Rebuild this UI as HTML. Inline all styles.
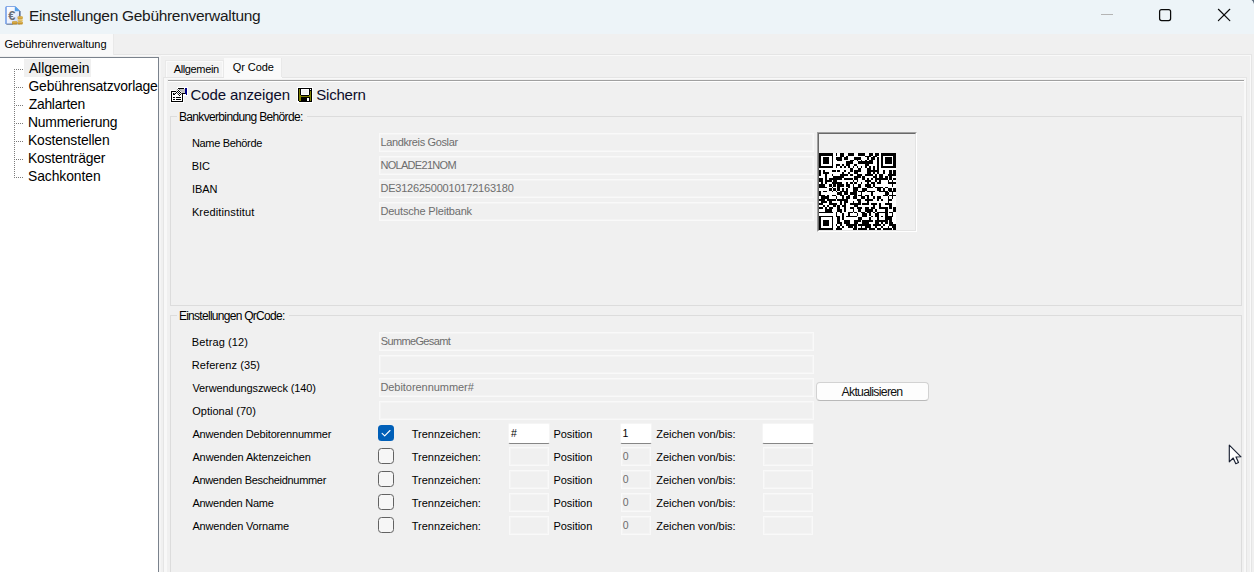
<!DOCTYPE html>
<html lang="de">
<head>
<meta charset="utf-8">
<title>Einstellungen Gebührenverwaltung</title>
<style>
html,body{margin:0;padding:0;}
body{width:1254px;height:572px;overflow:hidden;background:#f0f0f0;position:relative;
 font-family:"Liberation Sans","DejaVu Sans",sans-serif;font-size:11px;color:#000;}
div,span{box-sizing:border-box;}
body>div,body>span,body>svg{position:absolute;}
.t{white-space:nowrap;line-height:20px;height:20px;}
#titlebar{left:0;top:0;width:1254px;height:34px;background:#edf4f8;}
#mainline{left:0;top:54px;width:1252px;height:520px;border-top:1px solid #e5e5e5;border-right:1px solid #e5e5e5;box-shadow:inset -1px 1px 0 #f9f9f9;}
#maintab{left:0;top:34px;width:114px;height:21px;background:#f9f9f9;border-right:1px solid #e9e9e9;}
#tree{left:-1px;top:57px;width:160px;height:520px;background:#fff;border:1px solid #7a828c;}
#sel{left:24px;top:59px;width:67px;height:18px;background:#f0f0f0;}
#tabpage{left:163px;top:77px;width:1084px;height:500px;border:1px solid #e5e5e5;box-shadow:inset 0 0 0 1px #f9f9f9;}
#tab1{left:165px;top:60px;width:59px;height:17px;background:#f3f3f3;border:1px solid #e9e9e9;border-bottom:none;box-shadow:inset 1px 1px 0 #fafafa, inset -1px 0 0 #fafafa;}
#tab2{left:224px;top:58px;width:58px;height:21px;background:#fafafa;border-right:1px solid #e9e9e9;box-shadow:inset 0 -1px 0 #fafafa;}
#tab2b{left:281px;top:77px;width:1px;height:2px;background:#fafafa;}
#sunk{left:168px;top:80px;width:1076px;height:2px;background:#fff;border-top:1px solid #a0a0a0;}
#sunkr{left:1244px;top:80px;width:1px;height:500px;background:#f8f8f8;}
.gb{border:1px solid #dcdcdc;}
#gb1{left:170px;top:116px;width:1072px;height:190px;}
#gb2{left:170px;top:315px;width:1072px;height:270px;}
#lstrip{left:164px;top:78px;width:3px;height:500px;background:#f8f8f8;}
#lstrip2{left:159px;top:55px;width:2px;height:520px;background:#f5f5f5;}
.gbm{background:#f0f0f0;height:3px;}
.field{background:#f0f0f0;border:1px solid #f9f9f9;box-shadow:inset 0 0 0 1px #f4f4f4;}
.ed{background:#fff;border:1px solid #f5f5f5;border-bottom:1px solid #868686;border-radius:2px;}
.cb{border:1px solid #626262;border-radius:3.5px;background:#f6f6f6;}
.cb.on{border:none;background:#005fb8;}
#btn{left:816px;top:382px;width:113px;height:19px;background:#fdfdfd;border:1px solid #d2d2d2;border-bottom-color:#b9b9b9;border-radius:4px;}
#qrframe{left:817px;top:132px;width:100px;height:100px;border-top:1px solid #a0a0a0;border-left:1px solid #a0a0a0;border-right:1px solid #fff;border-bottom:1px solid #fff;}
#qrframe2{left:818px;top:133px;width:98px;height:98px;border-top:1px solid #696969;border-left:1px solid #696969;border-right:1px solid #e3e3e3;border-bottom:1px solid #e3e3e3;}
</style>
</head>
<body>
<div id="titlebar"></div>
<div id="mainline"></div>
<div id="maintab"></div>
<div id="tree"></div>
<div id="sel"></div>
<div id="tabpage"></div>
<div id="lstrip"></div>
<div id="lstrip2"></div>
<div id="tab1"></div>
<div id="tab2"></div>
<div id="tab2b"></div>
<div id="sunk"></div>
<div id="sunkr"></div>
<div id="gb1" class="gb"></div>
<div class="gbm" style="left:177px;top:115px;width:130px"></div>
<div id="gb2" class="gb"></div>
<div class="gbm" style="left:177px;top:314px;width:112px"></div>
<div id="qrframe"></div>
<div id="qrframe2"></div>
<svg id="qr" style="left:819px;top:153px" width="77" height="77" viewBox="0 0 77 77" shape-rendering="crispEdges"><rect width="77" height="77" fill="#fff"/><path d="M39 0h7v3h-7zM62 0h15v3h-15zM29 0h6v3h-6zM50 0h4v3h-4zM56 0h4v3h-4zM17 0h1v3h-1zM0 0h14v3h-14zM21 0h4v4h-4zM46 3h6v1h-6zM54 3h4v1h-4zM27 3h2v1h-2zM17 4h6v3h-6zM25 4h4v3h-4zM48 4h2v3h-2zM35 4h7v3h-7zM52 4h4v3h-4zM18 7h5v1h-5zM38 7h1v1h-1zM50 7h4v1h-4zM31 7h4v1h-4zM46 7h2v1h-2zM42 7h1v1h-1zM4 4h6v7h-6zM66 4h7v7h-7zM27 8h7v3h-7zM39 8h15v3h-15zM13 3h1v10h-1zM74 3h3v10h-3zM62 3h2v10h-2zM0 3h2v10h-2zM27 11h4v2h-4zM35 11h3v2h-3zM23 11h2v2h-2zM17 11h4v2h-4zM46 11h4v2h-4zM50 13h2v2h-2zM38 13h1v2h-1zM42 13h1v2h-1zM62 13h15v2h-15zM34 13h1v2h-1zM46 13h2v2h-2zM25 13h2v2h-2zM29 13h2v2h-2zM17 13h1v2h-1zM0 13h14v2h-14zM21 13h2v2h-2zM58 4h2v13h-2zM54 13h2v4h-2zM48 15h4v2h-4zM39 15h3v2h-3zM31 15h3v4h-3zM48 17h12v2h-12zM13 17h4v2h-4zM35 17h7v2h-7zM4 17h2v2h-2zM25 17h2v2h-2zM18 17h3v2h-3zM64 17h2v4h-2zM70 17h3v4h-3zM74 17h3v4h-3zM4 19h6v2h-6zM35 19h4v2h-4zM48 19h4v2h-4zM23 19h2v2h-2zM54 19h2v2h-2zM29 19h2v2h-2zM58 19h2v2h-2zM0 17h2v6h-2zM13 21h1v2h-1zM31 21h3v2h-3zM21 21h8v2h-8zM56 21h2v2h-2zM69 21h8v2h-8zM46 21h8v2h-8zM38 21h5v2h-5zM60 21h4v4h-4zM54 23h4v2h-4zM35 23h7v2h-7zM14 23h11v2h-11zM66 23h3v2h-3zM6 21h2v6h-2zM43 23h3v4h-3zM70 23h3v4h-3zM48 25h2v2h-2zM35 25h4v2h-4zM10 25h13v2h-13zM74 25h3v2h-3zM25 25h9v2h-9zM52 25h2v2h-2zM56 25h13v2h-13zM0 25h4v4h-4zM38 27h1v2h-1zM56 27h2v2h-2zM46 27h6v2h-6zM34 27h1v2h-1zM60 27h2v2h-2zM73 27h1v2h-1zM6 27h7v2h-7zM69 27h1v2h-1zM14 27h4v2h-4zM31 29h3v2h-3zM2 29h2v2h-2zM48 29h2v2h-2zM13 29h10v2h-10zM58 29h4v2h-4zM6 29h2v2h-2zM69 29h8v2h-8zM35 29h3v2h-3zM27 29h2v2h-2zM42 29h1v2h-1zM52 29h4v2h-4zM27 31h4v3h-4zM14 31h3v3h-3zM46 31h6v3h-6zM34 31h1v3h-1zM10 31h3v3h-3zM0 31h6v3h-6zM73 31h1v3h-1zM39 31h3v3h-3zM18 31h7v3h-7zM54 31h2v3h-2zM13 34h1v1h-1zM34 34h8v1h-8zM56 34h8v1h-8zM29 34h2v1h-2zM0 34h8v1h-8zM66 34h3v1h-3zM48 34h6v1h-6zM18 34h3v4h-3zM64 35h2v3h-2zM14 35h3v3h-3zM69 35h4v3h-4zM58 35h4v3h-4zM34 35h5v3h-5zM10 35h3v3h-3zM74 35h3v3h-3zM23 35h2v3h-2zM27 35h2v3h-2zM43 35h5v3h-5zM13 38h1v1h-1zM48 38h8v1h-8zM70 38h7v1h-7zM21 38h8v1h-8zM60 38h9v1h-9zM39 38h7v1h-7zM34 38h4v1h-4zM4 38h4v1h-4zM17 38h1v1h-1zM0 38h2v4h-2zM25 39h4v3h-4zM18 39h5v3h-5zM66 39h4v3h-4zM73 39h1v3h-1zM31 39h7v3h-7zM42 39h1v3h-1zM52 39h2v4h-2zM70 42h7v1h-7zM64 42h5v1h-5zM13 42h4v1h-4zM8 42h2v1h-2zM39 42h4v1h-4zM0 42h6v1h-6zM21 42h4v1h-4zM35 42h3v1h-3zM29 42h2v1h-2zM46 42h4v1h-4zM27 43h4v3h-4zM48 43h2v3h-2zM58 43h4v3h-4zM2 43h8v3h-8zM73 43h1v3h-1zM34 43h4v3h-4zM23 43h2v3h-2zM54 43h2v3h-2zM69 43h1v3h-1zM17 43h1v3h-1zM42 43h4v3h-4zM38 46h4v2h-4zM8 46h9v2h-9zM18 46h11v2h-11zM0 46h6v2h-6zM62 46h2v2h-2zM46 46h8v2h-8zM69 46h4v2h-4zM58 46h2v2h-2zM25 48h4v2h-4zM48 48h2v2h-2zM34 48h1v2h-1zM10 48h3v2h-3zM39 48h3v2h-3zM69 48h1v2h-1zM2 48h6v2h-6zM21 48h2v4h-2zM43 50h7v2h-7zM0 50h4v2h-4zM52 50h6v2h-6zM31 50h11v2h-11zM66 50h7v2h-7zM25 50h2v2h-2zM10 50h8v2h-8zM60 50h2v4h-2zM23 52h4v2h-4zM14 52h3v2h-3zM4 52h2v2h-2zM8 52h2v2h-2zM35 52h4v2h-4zM54 52h2v2h-2zM70 52h3v4h-3zM18 52h3v4h-3zM0 54h4v2h-4zM10 54h4v2h-4zM60 54h9v2h-9zM6 54h2v2h-2zM31 54h4v2h-4zM38 54h5v2h-5zM46 54h4v2h-4zM52 54h4v2h-4zM74 54h3v5h-3zM25 54h2v5h-2zM18 56h5v3h-5zM56 56h2v3h-2zM34 56h1v3h-1zM6 56h7v3h-7zM46 56h8v3h-8zM39 56h3v3h-3zM66 56h3v3h-3zM58 59h11v1h-11zM70 59h4v1h-4zM48 59h4v1h-4zM42 59h4v1h-4zM35 59h3v1h-3zM54 59h2v1h-2zM0 59h14v1h-14zM29 59h5v1h-5zM21 59h2v1h-2zM17 59h1v4h-1zM50 60h2v3h-2zM38 60h1v3h-1zM73 60h1v3h-1zM29 60h2v3h-2zM66 60h3v3h-3zM56 60h4v4h-4zM43 60h5v4h-5zM0 63h14v1h-14zM66 63h8v1h-8zM62 63h2v1h-2zM52 63h2v1h-2zM17 63h4v1h-4zM27 63h11v1h-11zM23 60h2v7h-2zM50 64h2v3h-2zM39 64h4v3h-4zM66 64h7v3h-7zM58 64h2v3h-2zM18 64h3v5h-3zM43 67h11v2h-11zM35 67h7v2h-7zM70 67h3v2h-3zM56 67h13v2h-13zM25 67h6v4h-6zM43 69h7v2h-7zM18 69h5v2h-5zM70 69h4v2h-4zM35 69h4v2h-4zM62 69h2v2h-2zM56 69h4v2h-4zM66 69h3v2h-3zM4 67h6v6h-6zM64 71h2v2h-2zM70 71h7v2h-7zM39 71h13v2h-13zM54 71h8v2h-8zM17 71h1v2h-1zM27 71h11v2h-11zM21 71h2v2h-2zM13 64h1v11h-1zM0 64h2v11h-2zM56 73h2v2h-2zM46 73h6v2h-6zM73 73h4v2h-4zM62 73h2v2h-2zM35 73h3v2h-3zM23 73h2v2h-2zM69 73h1v2h-1zM42 73h1v2h-1zM18 73h3v2h-3zM29 73h5v2h-5zM17 75h6v2h-6zM58 75h4v2h-4zM74 75h3v2h-3zM34 75h4v2h-4zM64 75h9v2h-9zM50 75h6v2h-6zM0 75h14v2h-14zM39 75h9v2h-9z" fill="#000"/></svg>
<div id="btn"></div>
<div class="field" style="left:379px;top:133px;width:435px;height:19px;"></div>
<div class="field" style="left:379px;top:156px;width:435px;height:19px;"></div>
<div class="field" style="left:379px;top:179px;width:435px;height:19px;"></div>
<div class="field" style="left:379px;top:202px;width:435px;height:19px;"></div>
<div class="field" style="left:379px;top:332px;width:435px;height:19px;"></div>
<div class="field" style="left:379px;top:355px;width:435px;height:19px;"></div>
<div class="field" style="left:379px;top:378px;width:435px;height:19px;"></div>
<div class="field" style="left:379px;top:401px;width:435px;height:19px;"></div>
<div class="ed" style="left:508px;top:423px;width:42px;height:21px;"></div>
<div class="field" style="left:509px;top:447px;width:40px;height:19px;"></div>
<div class="field" style="left:509px;top:470px;width:40px;height:19px;"></div>
<div class="field" style="left:509px;top:493px;width:40px;height:19px;"></div>
<div class="field" style="left:509px;top:516px;width:40px;height:19px;"></div>
<div class="ed" style="left:620px;top:423px;width:32px;height:21px;"></div>
<div class="field" style="left:621px;top:447px;width:30px;height:19px;"></div>
<div class="field" style="left:621px;top:470px;width:30px;height:19px;"></div>
<div class="field" style="left:621px;top:493px;width:30px;height:19px;"></div>
<div class="field" style="left:621px;top:516px;width:30px;height:19px;"></div>
<div class="ed" style="left:762px;top:423px;width:52px;height:21px;"></div>
<div class="field" style="left:763px;top:447px;width:50px;height:19px;"></div>
<div class="field" style="left:763px;top:470px;width:50px;height:19px;"></div>
<div class="field" style="left:763px;top:493px;width:50px;height:19px;"></div>
<div class="field" style="left:763px;top:516px;width:50px;height:19px;"></div>
<div class="cb on" style="left:378px;top:425px;width:16px;height:16px;"></div>
<div class="cb" style="left:378px;top:448px;width:16px;height:16px;"></div>
<div class="cb" style="left:378px;top:471px;width:16px;height:16px;"></div>
<div class="cb" style="left:378px;top:494px;width:16px;height:16px;"></div>
<div class="cb" style="left:378px;top:517px;width:16px;height:16px;"></div>
<svg id="winctl" style="left:1090px;top:0" width="164" height="34" viewBox="1090 0 164 34">
<path d="M1101 14.5H1113" stroke="#b4b4b4" stroke-width="1" fill="none"/>
<rect x="1159.6" y="9.6" width="11" height="11" rx="2" fill="none" stroke="#0a0a0a" stroke-width="1.25"/>
<path d="M1218.4 9.3L1229.8 20.6M1229.8 9.3L1218.4 20.6" stroke="#0a0a0a" stroke-width="1.2" stroke-linecap="round" fill="none"/>
<path d="M1251.5 0 Q1253 0.5 1254 4 L1254 0Z" fill="#5a6a7c"/>
</svg>
<svg id="appicon" style="left:4px;top:5px" width="21" height="21" viewBox="4 5 21 21">
<defs><linearGradient id="pg" x1="0" y1="0" x2="1" y2="1"><stop offset="0" stop-color="#ffffff"/><stop offset="0.55" stop-color="#eef2fc"/><stop offset="1" stop-color="#b9c9ee"/></linearGradient></defs>
<path d="M6 6.5H15.5L20 11V24H6Z" fill="url(#pg)" stroke="#86a9e6" stroke-width="1"/><path d="M6 7V24" stroke="#6f9be8" stroke-width="1.2"/>
<path d="M19.8 11V17" stroke="#566070" stroke-width="1.2"/>
<path d="M6.5 24.3H13" stroke="#7a8596" stroke-width="1"/>
<path d="M14.8 6.3L20 11.3H14.8Z" fill="#4f9ee9"/>
<text x="8.2" y="20.3" font-family="Liberation Sans, sans-serif" font-weight="bold" font-size="13" fill="#6a7079">€</text>
<rect x="12" y="21.2" width="5.4" height="3.4" rx="1" fill="#c4932c"/>
<rect x="17.6" y="16.2" width="5.2" height="3" rx="1" fill="#cfa23a"/>
<rect x="17.6" y="19.3" width="5.2" height="2.1" rx="0.8" fill="#e8c468"/>
<rect x="17.6" y="21.6" width="5.2" height="3" rx="1" fill="#c4932c"/>
<path d="M12.5 22.2H16.8M18 17.2H22.4M18 22.6H22.4" stroke="#e2bd5e" stroke-width="0.8"/>
</svg>
<svg id="treelines" style="left:0;top:57px" width="30" height="130" viewBox="0 57 30 130" shape-rendering="crispEdges">
<g stroke="#7b7b7b" stroke-width="1" stroke-dasharray="1 1" fill="none">
<path d="M14.5 69V178"/>
<path d="M14 69.5H23"/><path d="M14 87.5H23"/><path d="M14 105.5H23"/><path d="M14 123.5H23"/><path d="M14 141.5H23"/><path d="M14 159.5H23"/><path d="M14 177.5H23"/>
</g>
</svg>
<svg id="tb1" style="left:169px;top:86px" width="20" height="18" viewBox="169 86 20 18" shape-rendering="crispEdges">
<defs><pattern id="dth" x="0" y="0" width="2" height="2" patternUnits="userSpaceOnUse"><rect width="2" height="2" fill="#fff"/><rect x="0" y="0" width="1" height="1" fill="#000"/><rect x="1" y="1" width="1" height="1" fill="#000"/></pattern></defs>
<rect x="170" y="90" width="14" height="13" fill="#fff"/>
<path d="M177 87h11v9h-4v2h-4z" fill="#fff"/>
<rect x="171.5" y="91.5" width="11" height="10" fill="#fff" stroke="#000" stroke-width="1"/>
<path d="M173 97.5h2M176 97.5h5M173 99.5h2M176 99.5h5" stroke="#000" stroke-width="1"/>
<rect x="173" y="93" width="2" height="2" fill="#000"/>
<rect x="179" y="89" width="6" height="4" fill="#c0c0c0"/>
<path d="M174 94L178 89L179 89L182 93L180 96L179 96L177 93L175 95Z" fill="url(#dth)" shape-rendering="auto"/>
<rect x="178" y="88" width="6" height="1" fill="#000"/>
<rect x="182" y="93" width="3" height="1" fill="#000"/>
<rect x="185" y="88" width="2" height="6" fill="#00008b"/>
<rect x="186" y="94" width="1" height="1" fill="#00008b"/>
</svg>
<svg id="tb2" style="left:297px;top:87px" width="16" height="16" viewBox="297 87 16 16" shape-rendering="crispEdges">
<rect x="297" y="87" width="16" height="16" fill="#fff"/>
<rect x="298" y="88" width="14" height="14" fill="#000"/>
<rect x="298" y="101" width="1" height="1" fill="#fff"/>
<rect x="299" y="89" width="1" height="12" fill="#808000"/>
<rect x="300" y="95" width="1" height="6" fill="#808000"/>
<rect x="299" y="96" width="12" height="1" fill="#808000"/>
<rect x="310" y="91" width="1" height="10" fill="#808000"/>
<rect x="309" y="95" width="1" height="1" fill="#808000"/>
<rect x="310" y="89" width="1" height="1" fill="#fff"/>
<rect x="301" y="89" width="8" height="6" fill="#fff"/>
<rect x="302" y="90" width="6" height="4" fill="#f0f0f0"/>
<rect x="301" y="97" width="9" height="5" fill="#000"/>
<rect x="307" y="98" width="2" height="3" fill="#fff"/>
</svg>
<svg id="chk" style="left:378px;top:425px" width="16" height="16" viewBox="0 0 16 16">
<path d="M4.1 8.3L6.7 10.8L12 5.5" stroke="#fff" stroke-width="1.1" fill="none" stroke-linecap="round" stroke-linejoin="round"/>
</svg>
<svg id="cursor" style="left:1227px;top:443px" width="17" height="24" viewBox="-2.3 -2.1 17 24">
<path d="M0 0V16.7L3.9 12.9L6.5 18.6L9.2 17.4L6.7 11.9L11.7 11.7Z" fill="#fff" stroke="#1b2233" stroke-width="1.15" stroke-linejoin="round"/>
</svg>

<span class="t" style="left:28.9px;top:5.80px;font-size:15.5px;letter-spacing:-0.305px;color:#1a1a1a;">Einstellungen Gebührenverwaltung</span>
<span class="t" style="left:4.4px;top:33.80px;letter-spacing:0.006px;">Gebührenverwaltung</span>
<span class="t" style="left:28.9px;top:57.90px;font-size:13.9px;letter-spacing:-0.048px;">Allgemein</span>
<span class="t" style="left:28.5px;top:75.90px;font-size:13.9px;letter-spacing:-0.194px;">Gebührensatzvorlage</span>
<span class="t" style="left:28.7px;top:93.90px;font-size:13.9px;letter-spacing:-0.260px;">Zahlarten</span>
<span class="t" style="left:28.0px;top:111.90px;font-size:13.9px;letter-spacing:-0.209px;">Nummerierung</span>
<span class="t" style="left:28.0px;top:129.90px;font-size:13.9px;letter-spacing:-0.146px;">Kostenstellen</span>
<span class="t" style="left:28.0px;top:147.90px;font-size:13.9px;letter-spacing:-0.188px;">Kostenträger</span>
<span class="t" style="left:28.0px;top:165.90px;font-size:13.9px;letter-spacing:-0.083px;">Sachkonten</span>
<span class="t" style="left:173.7px;top:59.00px;letter-spacing:-0.363px;">Allgemein</span>
<span class="t" style="left:232.8px;top:57.00px;letter-spacing:-0.091px;">Qr Code</span>
<span class="t" style="left:190.5px;top:85.30px;font-size:15px;letter-spacing:-0.115px;color:#0c0c2a;">Code anzeigen</span>
<span class="t" style="left:316.3px;top:85.30px;font-size:15px;letter-spacing:-0.219px;color:#0c0c2a;">Sichern</span>
<span class="t" style="left:178.9px;top:106.90px;font-size:12px;letter-spacing:-0.652px;">Bankverbindung Behörde:</span>
<span class="t" style="left:178.9px;top:305.90px;font-size:12px;letter-spacing:-0.719px;">Einstellungen QrCode:</span>
<span class="t" style="left:191.9px;top:133.00px;letter-spacing:-0.325px;">Name Behörde</span>
<span class="t" style="left:380.4px;top:132.00px;letter-spacing:-0.366px;color:#6d6d6d;">Landkreis Goslar</span>
<span class="t" style="left:191.8px;top:156.00px;letter-spacing:-0.118px;">BIC</span>
<span class="t" style="left:380.4px;top:155.00px;letter-spacing:-0.689px;color:#6d6d6d;">NOLADE21NOM</span>
<span class="t" style="left:191.9px;top:179.00px;">IBAN</span>
<span class="t" style="left:380.4px;top:178.00px;letter-spacing:-0.201px;color:#6d6d6d;">DE31262500010172163180</span>
<span class="t" style="left:191.9px;top:202.00px;letter-spacing:0.147px;">Kreditinstitut</span>
<span class="t" style="left:380.4px;top:201.00px;letter-spacing:-0.182px;color:#6d6d6d;">Deutsche Pleitbank</span>
<span class="t" style="left:191.8px;top:332.00px;letter-spacing:0.116px;">Betrag (12)</span>
<span class="t" style="left:380.7px;top:331.00px;letter-spacing:-0.629px;color:#6d6d6d;">SummeGesamt</span>
<span class="t" style="left:191.8px;top:355.00px;letter-spacing:0.082px;">Referenz (35)</span>
<span class="t" style="left:192.5px;top:378.00px;letter-spacing:-0.116px;">Verwendungszweck (140)</span>
<span class="t" style="left:380.4px;top:377.00px;letter-spacing:-0.048px;color:#6d6d6d;">Debitorennummer#</span>
<span class="t" style="left:192.3px;top:401.00px;letter-spacing:-0.005px;">Optional (70)</span>
<span class="t" style="left:192.4px;top:424.00px;letter-spacing:-0.177px;">Anwenden Debitorennummer</span>
<span class="t" style="left:411.8px;top:424.00px;letter-spacing:-0.017px;">Trennzeichen:</span>
<span class="t" style="left:553.4px;top:424.00px;letter-spacing:-0.034px;">Position</span>
<span class="t" style="left:656.3px;top:424.00px;letter-spacing:-0.056px;">Zeichen von/bis:</span>
<span class="t" style="left:511.1px;top:423.00px;font-size:10.5px;">#</span>
<span class="t" style="left:622.4px;top:423.00px;font-size:10.5px;">1</span>
<span class="t" style="left:192.4px;top:447.00px;letter-spacing:-0.105px;">Anwenden Aktenzeichen</span>
<span class="t" style="left:411.8px;top:447.00px;letter-spacing:-0.017px;">Trennzeichen:</span>
<span class="t" style="left:553.4px;top:447.00px;letter-spacing:-0.034px;">Position</span>
<span class="t" style="left:656.3px;top:447.00px;letter-spacing:-0.056px;">Zeichen von/bis:</span>
<span class="t" style="left:622.7px;top:446.00px;font-size:10.5px;color:#6d6d6d;">0</span>
<span class="t" style="left:192.4px;top:470.00px;letter-spacing:-0.305px;">Anwenden Bescheidnummer</span>
<span class="t" style="left:411.8px;top:470.00px;letter-spacing:-0.017px;">Trennzeichen:</span>
<span class="t" style="left:553.4px;top:470.00px;letter-spacing:-0.034px;">Position</span>
<span class="t" style="left:656.3px;top:470.00px;letter-spacing:-0.056px;">Zeichen von/bis:</span>
<span class="t" style="left:622.7px;top:469.00px;font-size:10.5px;color:#6d6d6d;">0</span>
<span class="t" style="left:192.4px;top:493.00px;letter-spacing:-0.242px;">Anwenden Name</span>
<span class="t" style="left:411.8px;top:493.00px;letter-spacing:-0.017px;">Trennzeichen:</span>
<span class="t" style="left:553.4px;top:493.00px;letter-spacing:-0.034px;">Position</span>
<span class="t" style="left:656.3px;top:493.00px;letter-spacing:-0.056px;">Zeichen von/bis:</span>
<span class="t" style="left:622.7px;top:492.00px;font-size:10.5px;color:#6d6d6d;">0</span>
<span class="t" style="left:192.4px;top:516.00px;letter-spacing:-0.154px;">Anwenden Vorname</span>
<span class="t" style="left:411.8px;top:516.00px;letter-spacing:-0.017px;">Trennzeichen:</span>
<span class="t" style="left:553.4px;top:516.00px;letter-spacing:-0.034px;">Position</span>
<span class="t" style="left:656.3px;top:516.00px;letter-spacing:-0.056px;">Zeichen von/bis:</span>
<span class="t" style="left:622.7px;top:515.00px;font-size:10.5px;color:#6d6d6d;">0</span>
<span class="t" style="left:841.5px;top:381.90px;font-size:12.3px;letter-spacing:-0.725px;color:#111;">Aktualisieren</span>
</body>
</html>
